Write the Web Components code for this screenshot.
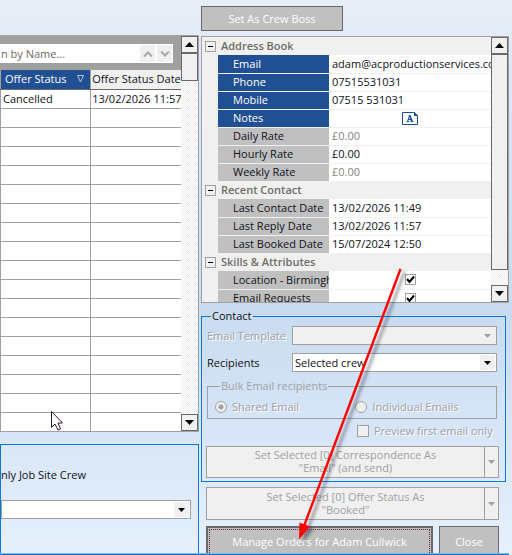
<!DOCTYPE html>
<html lang="en">
<head>
<meta charset="utf-8">
<title>Crew offers</title>
<style>
html,body{margin:0;height:100%}
body{font:11px/14px "Open Sans","Noto Sans",sans-serif;color:#101018;overflow:hidden}
</style>
</head>
<body>
<crew-window></crew-window>
<script>
const base = `*{box-sizing:border-box}button,input,select{font:inherit;color:inherit;margin:0;border-radius:0}`;
const define = (name, html, setup) => customElements.define(name, class extends HTMLElement {
  connectedCallback() {
    if (this.shadowRoot) return;
    const root = this.attachShadow({mode: 'open'});
    const t = document.createElement('template');
    t.innerHTML = `<style>${base}</style>` + (typeof html === 'function' ? html(this) : html);
    root.append(t.content.cloneNode(true));
    if (setup) setup(this, root);
  }
});
const down = c => `<svg class="arrow" width="7" height="4" viewBox="0 0 7 4" aria-hidden="true"><path d="M0 0h7L3.5 4z" fill="${c}"/></svg>`;

/* Scroll bar with square end buttons; --thumb is the length of the thumb */
define('scroll-bar', `
<style>
:host{display:flex;flex-direction:column;width:17px;
 background:repeating-conic-gradient(#fff 0 25%,#ececec 0 50%) 0 0/2px 2px}
button{flex:none;width:17px;height:17px;padding:0;background:#f0f0f0;border:1px solid #696969;display:grid;place-items:center}
i{flex:none;height:var(--thumb);background:#f0f0f0;border:1px solid #696969}
b{flex:1}
</style>
<button aria-label="Scroll up"><svg width="9" height="5" viewBox="0 0 9 5"><path d="M0 5h9L4.500 0z" fill="#000"/></svg></button>
<i></i><b></b>
<button aria-label="Scroll down"><svg width="9" height="5" viewBox="0 0 9 5"><path d="M0 0h9L4.500 5z" fill="#000"/></svg></button>`);

/* Drop-down list */
define('drop-down', el => {
  const off = el.hasAttribute('disabled');
  return `
<style>
:host{display:grid;height:19px}
select{grid-area:1/1;width:100%;height:19px;appearance:none;border:1px solid #a0a0a0;background:${off ? '#f0f0f0' : '#fff'};padding:0 2px;opacity:1}
span{grid-area:1/1;justify-self:end;align-self:center;width:15px;height:15px;margin-right:2px;background:#f0f0f0;display:grid;place-items:center;pointer-events:none}
</style>
<select aria-label="${el.getAttribute('label')}" ${off ? 'disabled' : ''}><option>${el.getAttribute('value') || ''}</option></select>
<span>${down(off ? '#a0a0a0' : '#000')}</span>`;
});

/* Disabled action with an attached menu button */
define('split-button', `
<style>
:host{display:flex;border:1px solid #a0a0a0;background:#f0f0f0;color:#a0a0a0;text-shadow:1px 1px #fff}
button{border:0;background:none;padding:0}
.main{flex:1;line-height:13px;padding:var(--top,1px) 0 3px}
.menu{width:14px;border-left:1px solid #a0a0a0;display:grid;place-items:center}
</style>
<button class="main" disabled><slot></slot></button>
<button class="menu" disabled aria-label="More">${down('#a0a0a0')}</button>`);

define('push-button', `
<style>
:host{display:grid}
button{color:#fff;background:#c0c0c0;border:1px solid #696969;padding:0}
:host([focused]) button{border-width:2px;outline:1px dotted #603040;outline-offset:-4px}
</style>
<button><slot></slot></button>`);

define('group-box', el => `
<style>
:host{display:block}
fieldset{margin:0;min-width:0;border:1px solid var(--line,#0078d7);padding:var(--pad,0)}
legend{padding:0 1px;margin-left:5px;line-height:14px;height:14px}
</style>
<fieldset>${el.hasAttribute('label') ? `<legend>${el.getAttribute('label')}</legend>` : ''}<slot></slot></fieldset>`);

/* Offer list */
define('offer-grid', `
<style>
:host{display:grid;grid-template-columns:minmax(0,1fr) 17px;border:1px solid #a0a0a0;border-left:0;background:#fff;--thumb:28px}
.bar{background:#a0a0a0;height:34px;padding:8px 8px 7px 0}
.find{display:flex;height:19px;background:#fff;padding:1px;gap:2px}
.find input{flex:1;min-width:0;border:0;padding:0;background:none}
.find input::placeholder{color:#6c6a5c;opacity:1}
.find button{width:15px;height:17px;border:0;padding:0;background:#f0f0f0;display:grid;place-items:center}
table{width:100%;border-collapse:collapse;table-layout:fixed;border-left:1px solid #a0a0a0}
th,td{height:19px;padding:0 2px;text-align:left;font-weight:400;border-bottom:1px solid #a0a0a0;white-space:nowrap;overflow:hidden;line-height:16px}
th{border-bottom-color:#696969;background:#f0f0f0}
th:first-child,td:first-child{border-right:1px solid #a0a0a0}
th:last-child,td:last-child{padding:0 0 0 1px}
td:first-child{padding-left:2px}
th.on{background:#214f93;color:#fff;padding:0 6px 0 4px}
th.on div{display:flex;justify-content:space-between;align-items:center}
tr:last-child td{border-bottom:0}
</style>
<div>
 <div class="bar"><div class="find"><input aria-label="Search" placeholder="n by Name...">
  <button aria-label="Previous"><svg width="10" height="6" viewBox="0 0 10 6"><path d="M1 5.500 5 1.500 9 5.500" fill="none" stroke="#a8a8a8" stroke-width="2"/></svg></button>
  <button aria-label="Next"><svg width="10" height="6" viewBox="0 0 10 6"><path d="M1 .500 5 4.500 9 .500" fill="none" stroke="#a8a8a8" stroke-width="2"/></svg></button></div></div>
 <table><thead><tr><th class="on"><div>Offer Status<svg width="7" height="8" viewBox="0 0 7 8"><path d="M.500 .500h6l-3 6.500z" fill="none" stroke="#b8c4d8"/></svg></div></th><th>Offer Status Date</th></tr></thead>
 <tbody><tr><td>Cancelled</td><td>13/02/2026 11:57</td></tr></tbody></table>
</div>
<scroll-bar></scroll-bar>`, (el, root) => {
  const body = root.querySelector('tbody');
  for (let i = 0; i < 17; i++) body.insertRow().append(document.createElement('td'), document.createElement('td'));
});

/* Property sheet */
const groups = [
  ['Address Book', [['Email', 'adam@acproductionservices.com', 'sel'], ['Phone', '07515531031', 'sel'], ['Mobile', '07515 531031', 'sel'], ['Notes', '#note', 'sel'],
    ['Daily Rate', '£0.00', 'dim'], ['Hourly Rate', '£0.00', ''], ['Weekly Rate', '£0.00', 'dim']]],
  ['Recent Contact', [['Last Contact Date', '13/02/2026 11:49', ''], ['Last Reply Date', '13/02/2026 11:57', ''], ['Last Booked Date', '15/07/2024 12:50', '']]],
  ['Skills &amp; Attributes', [['Location - Birmingh', '#check', ''], ['Email Requests', '#check', '']]]
];
const note = `<svg width="16" height="13" viewBox="0 0 16 13" role="img" aria-label="Note"><path d="M.500 .500H12.500L15.500 3.500V12.500H.500z" fill="#fff" stroke="#1d4f97"/><path d="M12 0l4 4h-4z" fill="#1d4f97"/><path d="M5.500 9.500 7.500 3.500" fill="none" stroke="#1d4f97"/><path d="M7.500 3 10 9.500" fill="none" stroke="#1d4f97" stroke-width="1.800"/><path d="M6 7.500h3M4.500 9.500h2.500M8.500 9.500h3" fill="none" stroke="#1d4f97"/></svg>`;
const value = (v, name) => v === '#note' ? note : v === '#check' ? `<input type="checkbox" checked aria-label="${name}">` : v;
define('property-sheet', `
<style>
:host{display:grid;grid-template-columns:minmax(0,1fr) 17px;border:1px solid #a0a0a0;height:267px;background:#f0f0f0;--thumb:216px}
.view{overflow:hidden}
table{width:100%;border-collapse:collapse;table-layout:fixed}
col.a{width:16px}col.b{width:111px}
tr{height:18px}
th,td{height:18px;padding:0 0 0 3px;text-align:left;font-weight:400;line-height:16px;white-space:nowrap;overflow:hidden}
td,tbody th[scope=row]{border-bottom:1px solid #f0f0f0}
th[scope=row]{background:#c0c0c0;padding-left:15px}
.sel th[scope=row]{background:#214f93;color:#fff}
td{background:#fff}
td.gut{background:none;padding:0}
td.mid{padding:0}
td.mid>*{display:block;margin:0 auto}
.dim td{color:#85857c}
th.cat{font-weight:600;color:#6d6d66;padding-left:3px}
th.cat div{display:flex;align-items:center;gap:5px}
th.cat button{width:11px;height:11px;padding:0;border:1px solid #a0a0a0;background:#f0f0f0;display:grid;place-items:center}
th.cat i{width:5px;height:1px;background:#000}
input{appearance:none;width:11px;height:11px;border:1px solid #a0a0a0;background:#fff url('data:image/svg+xml,<svg xmlns="http://www.w3.org/2000/svg" viewBox="0 0 9 9"><path d="M1 4l2.500 3L8 1.500" fill="none" stroke="black" stroke-width="2"/></svg>') center/9px}
</style>
<div class="view"><table><colgroup><col class="a"><col class="b"><col></colgroup>
${groups.map(([g, rows]) => `<tbody><tr><th class="cat" colspan="3"><div><button aria-label="Collapse"><i></i></button>${g}</div></th></tr>` +
  rows.map(([n, v, c]) => `<tr class="${c}"><td class="gut"></td><th scope="row">${n}</th><td class="${v[0] === '#' ? 'mid' : ''}">${value(v, n)}</td></tr>`).join('') + '</tbody>').join('')}
</table></div><scroll-bar></scroll-bar>`);

define('choice-item', el => `
<style>
:host{display:block;color:#a0a0a0;text-shadow:1px 1px #fff}
label{display:flex;align-items:center;gap:5px;line-height:14px}
input{appearance:none;width:12px;height:12px;border:1px solid #a0a0a0;background:#f0f0f0;flex:none}
input[type=radio]{border-radius:50%}
input[type=radio]:checked{background:radial-gradient(circle,#a0a0a0 0 2px,#f0f0f0 3px)}
</style>
<label><input type="${el.getAttribute('type')}" ${el.hasAttribute('checked') ? 'checked' : ''} disabled><slot></slot></label>`);

define('contact-panel', `
<style>
:host{display:block}
.outer{--pad:3px 7px 3px 4px}
.row{display:grid;grid-template-columns:85px minmax(0,1fr);align-items:center;margin:0 1px 8px}
.off{color:#a0a0a0;text-shadow:1px 1px #fff}
.inner{--line:#a0a0a0;--pad:7px 7px 4px;margin:-1px 1px 5px;color:#a0a0a0}
.pair{display:grid;grid-template-columns:141fr 134fr}
.pre{margin:0 0 8px 151px}
split-button{margin-right:-1px}
</style>
<group-box class="outer" label="Contact">
<div class="row"><span class="off">Email Template</span><drop-down label="Email Template" disabled></drop-down></div>
<div class="row"><span>Recipients</span><drop-down label="Recipients" value="Selected crew"></drop-down></div>
<group-box class="inner" label="Bulk Email recipients"><div class="pair"><choice-item type="radio" checked>Shared Email</choice-item><choice-item type="radio">Individual Emails</choice-item></div></group-box>
<choice-item class="pre" type="checkbox">Preview first email only</choice-item>
<split-button>Set Selected [0] Correspondence As<br>"Email" (and send)</split-button>
</group-box>`);

define('crew-window', `
<style>
:host{display:flex;flex-direction:column;height:100vh;position:relative;
 background:linear-gradient(#e7eef8 0,#dfe9f5 10%,#c9dbef 55%,#d5e4f6 75%,#e6f1fd 100%)}
main{flex:1;min-height:0;overflow:hidden;display:grid;grid-template-columns:199fr 311fr;gap:2px}
.left{padding-top:35px;min-width:0}
.site{--pad:23px 7px 60px 0;margin-top:12px;background:linear-gradient(#dae7f8,#e8f2fe)}
.site p{margin:0 0 18px}
.right{padding:6px 3px 0 0;min-width:0}
.boss{width:142px;height:25px;margin-bottom:5px}
contact-panel{margin:6px 3px 5px 0}
.book{--top:2px;margin:0 10px 6px 5px}
.end{display:grid;grid-template-columns:227fr 60fr;gap:6px;margin:0 10px 0 5px;height:32px}
footer{height:2px;background:#0078d7;border-top:1px solid #8fb5da;box-sizing:border-box;margin-right:3px}
.over{position:absolute;inset:0;pointer-events:none}
</style>
<main>
<section class="left"><offer-grid></offer-grid>
<group-box class="site"><p>nly Job Site Crew</p><drop-down label="Job Site Crew"></drop-down></group-box></section>
<section class="right">
<push-button class="boss">Set As Crew Boss</push-button>
<property-sheet></property-sheet>
<contact-panel></contact-panel>
<split-button class="book">Set Selected [0] Offer Status As<br>"Booked"</split-button>
<div class="end"><push-button focused>Manage Orders for Adam Cullwick</push-button><push-button>Close</push-button></div>
</section>
</main>
<footer></footer>
<svg class="over" width="512" height="555" viewBox="0 0 512 555" aria-hidden="true">
<defs><filter id="s" x="-20%" y="-20%" width="150%" height="150%"><feDropShadow dx="4" dy="3" stdDeviation="1.500" flood-color="#303040" flood-opacity=".5"/></filter></defs>
<g filter="url(#s)"><path d="M400.500 269 304 526" stroke="#f00" stroke-width="2.400" fill="none"/><path d="M299 539.500 299.500 522.500 310 526.500z" fill="#f00"/></g>
<path d="M51.500 411.500v16l3.500-3.500 3 6 2.500-1-2.500-6h4.500z" fill="#fff" stroke="#2a1a30"/>
</svg>`);
</script>
</body>
</html>
